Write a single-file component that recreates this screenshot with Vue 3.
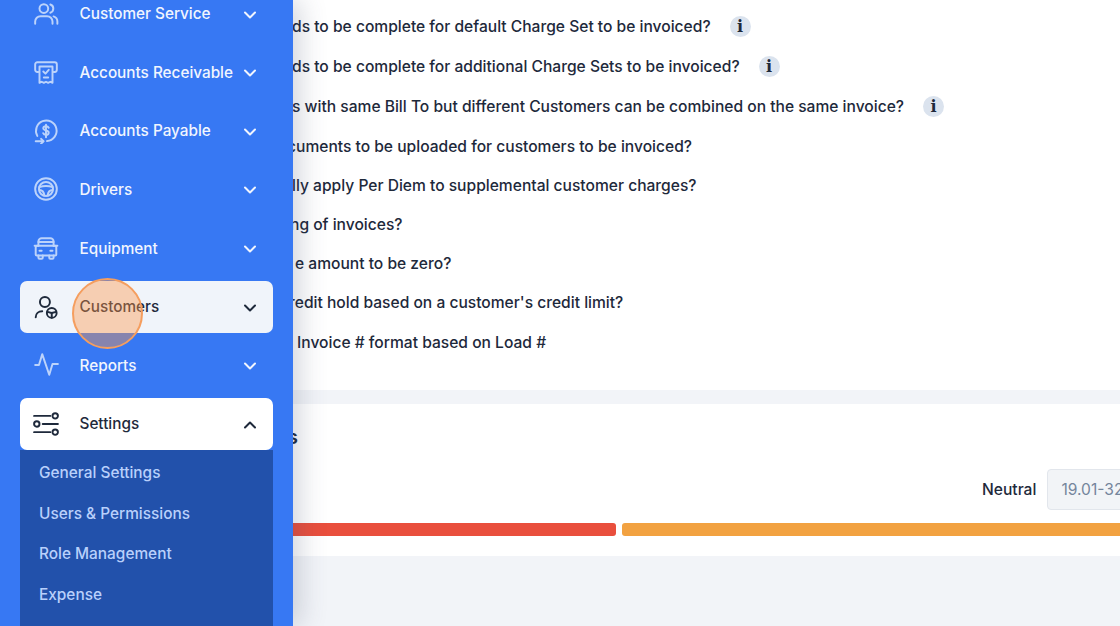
<script setup>
const navItems = [
  { label: 'Customer Service', paths: ['M14 7a4 4 0 1 1-8 0 4 4 0 0 1 8 0', 'M2 21v-2a5 5 0 0 1 5-5h6a5 5 0 0 1 5 5v2', 'M16 3.2a4 4 0 0 1 0 7.6', 'M19 14.2a5 5 0 0 1 3.5 4.8v2'] },
  { label: 'Accounts Receivable', paths: ['M5 12H4a2 2 0 0 1-2-2V5a2 2 0 0 1 2-2h16a2 2 0 0 1 2 2v5a2 2 0 0 1-2 2h-1', 'M6 7h12v15l-2-1-2 1-2-1-2 1-2-1-2 1z', 'M9.5 11.5l2 2 3-3.5', 'M10 17h4'] },
  { label: 'Accounts Payable', paths: ['M4 16.5A9.5 9.5 0 1 1 13 21.3', 'M14.5 9c-.4-.9-1.3-1.4-2.5-1.4-1.4 0-2.5.7-2.5 1.9 0 2.6 5 1.4 5 4 0 1.3-1.1 2-2.5 2-1.3 0-2.2-.5-2.6-1.5', 'M12 6.3v11.4', 'M2.5 21.5h7', 'M7.5 19.3l2.2 2.2-2.2 2.2'] },
  { label: 'Drivers', paths: ['M22 12a10 10 0 1 1-20 0 10 10 0 0 1 20 0', 'M18.5 12a6.5 6.5 0 1 1-13 0 6.5 6.5 0 0 1 13 0', 'M5.8 10.3c3.8-1.2 8.6-1.2 12.4 0', 'M6 13c2.5 0 4 1.5 4.5 5', 'M18 13c-2.5 0-4 1.5-4.5 5'] },
  { label: 'Equipment', paths: ['M5 10V6a3 3 0 0 1 3-3h8a3 3 0 0 1 3 3v4', 'M4 10h16a1.5 1.5 0 0 1 1.5 1.5V18a1 1 0 0 1-1 1h-17a1 1 0 0 1-1-1v-6.5A1.5 1.5 0 0 1 4 10', 'M5 6.5h14', 'M5 19v2a1 1 0 0 0 1 1h2a1 1 0 0 0 1-1v-2', 'M15 19v2a1 1 0 0 0 1 1h2a1 1 0 0 0 1-1v-2', 'M6 14.5h2', 'M16 14.5h2', 'M5 10H1.5', 'M19 10h3.5'] },
  { label: 'Customers', active: true, paths: ['M15.6 7.4a4.6 4.6 0 1 1-9.2 0 4.6 4.6 0 0 1 9.2 0', 'M2.5 21.5c0-3.5 2.5-5.5 6-5.5', 'M21.8 17.5a4.5 4.5 0 1 1-9 0 4.5 4.5 0 0 1 9 0', 'M13.3 16.5l4 1 4-1', 'M17.3 17.5v4.5'] },
  { label: 'Reports', paths: ['M2 12h3.5l3-10 6.5 19 3-10h5'] },
  { label: 'Settings', open: true, paths: ['M1 4.5h15', 'M23 4.5a2.5 2.5 0 1 1-5 0 2.5 2.5 0 0 1 5 0', 'M6 12a2.5 2.5 0 1 1-5 0 2.5 2.5 0 0 1 5 0', 'M9 12h14', 'M1 19.5h15', 'M23 19.5a2.5 2.5 0 1 1-5 0 2.5 2.5 0 0 1 5 0'] }
]

const subItems = ['General Settings', 'Users & Permissions', 'Role Management', 'Expense']

const questions = [
  { text: 'ds to be complete for default Charge Set to be invoiced?', shift: -1, tip: true },
  { text: 'ds to be complete for additional Charge Sets to be invoiced?', shift: -1, tip: true },
  { text: 's with same Bill To but different Customers can be combined on the same invoice?', shift: -1, tip: true },
  { text: 'cuments to be uploaded for customers to be invoiced?', shift: -6 },
  { text: 'lly apply Per Diem to supplemental customer charges?', shift: -1 },
  { text: 'ng of invoices?', shift: -3 },
  { text: 'e amount to be zero?', shift: 2 },
  { text: 'redit hold based on a customer\'s credit limit?', shift: -4 },
  { text: 'Invoice # format based on Load #', shift: 4 }
]
</script>

<template>
  <div class="page">
    <aside class="sidebar">
      <div class="nav">
        <template v-for="item in navItems" :key="item.label">
          <div class="nav-item" :class="{ active: item.active, open: item.open }">
            <svg class="nav-icon" viewBox="0 0 24 24">
              <path v-for="d in item.paths" :key="d" :d="d" />
            </svg>
            <span class="nav-label">{{ item.label }}</span>
            <svg class="chevron" viewBox="0 0 24 24">
              <path :d="item.open ? 'M6 15l6-6 6 6' : 'M6 9l6 6 6-6'" />
            </svg>
          </div>
          <div v-if="item.open" class="sub-menu">
            <div v-for="sub in subItems" :key="sub" class="sub-item">{{ sub }}</div>
          </div>
        </template>
      </div>
      <div class="click-ring"></div>
    </aside>

    <main class="content">
      <section class="card questions">
        <div
          v-for="q in questions"
          :key="q.text"
          class="question"
          :class="{ tall: q.tip }"
          :style="{ marginLeft: q.shift + 'px' }"
        >
          <span>{{ q.text }}</span>
          <span v-if="q.tip" class="info">i</span>
        </div>
      </section>

      <section class="card rating">
        <div class="rating-title">s</div>
        <div class="neutral-row">
          <span class="neutral-label">Neutral</span>
          <div class="neutral-input">19.01-32</div>
        </div>
        <div class="bar">
          <div class="bar-red"></div>
          <div class="bar-orange"></div>
        </div>
      </section>
    </main>
  </div>
</template>

<style scoped>
.page {
  display: flex;
  width: 1120px;
  height: 626px;
  overflow: hidden;
  background: #f2f4f8;
  font-family: Inter, "Liberation Sans", sans-serif;
}

.sidebar {
  position: relative;
  z-index: 2;
  flex: 0 0 293px;
  height: 626px;
  background: #3778f3;
  box-shadow: 6px 0 26px rgba(60, 72, 100, 0.24);
}

.nav {
  display: flex;
  flex-direction: column;
  gap: 6.6px;
  height: 626px;
  margin-top: -12.3px;
  padding: 0 20px;
  box-sizing: border-box;
}

.nav-item {
  display: flex;
  flex: 0 0 52px;
  align-items: center;
  height: 52px;
  padding: 0 13px;
  box-sizing: border-box;
  border-radius: 7px;
  color: #f1f5fe;
}

.nav-item.active {
  background: #f0f4fa;
  color: #1e293b;
}

.nav-item.open {
  background: #fff;
  color: #1e293b;
}

.nav-icon {
  flex: 0 0 26px;
  width: 26px;
  height: 26px;
  fill: none;
  stroke: #bcd3fb;
  stroke-width: 1.8;
  stroke-linecap: round;
  stroke-linejoin: round;
}

.nav-item.active .nav-icon,
.nav-item.open .nav-icon {
  stroke: #1e293b;
  stroke-width: 1.8;
}

.nav-label {
  flex: 1;
  margin-left: 20.5px;
  font-size: 15.3px;
  font-weight: 500;
  white-space: nowrap;
}

.chevron {
  flex: 0 0 20px;
  width: 20px;
  height: 20px;
  transform: translateY(1px);
  fill: none;
  stroke: currentColor;
  stroke-width: 2.4;
  stroke-linecap: round;
  stroke-linejoin: round;
}

.sub-menu {
  flex: 1;
  margin-top: -6.6px;
  padding-top: 3.5px;
  background: #2251ab;
  min-height: 200px;
}

.sub-item {
  height: 40.4px;
  padding-left: 19px;
  line-height: 40.4px;
  font-size: 15.4px;
  font-weight: 500;
  color: #b9d0fb;
}

/* click highlight from the recording */
.click-ring {
  position: absolute;
  top: 278px;
  left: 72px;
  width: 71px;
  height: 71px;
  box-sizing: border-box;
  border: 2.5px solid #f59e5f;
  border-radius: 50%;
  background: rgba(255, 150, 70, 0.4);
}

.content {
  flex: 1;
  min-width: 0;
  overflow: hidden;
}

.card {
  background: #fff;
}

.questions {
  height: 390px;
  padding-top: 6.6px;
  box-sizing: border-box;
}

.question {
  display: flex;
  align-items: center;
  height: 39.2px;
  font-size: 15.6px;
  line-height: 20px;
  padding-top: 1px;
  box-sizing: border-box;
  font-weight: 500;
  color: #1e293b;
  white-space: nowrap;
}

.question.tall {
  height: 40px;
  padding-top: 0;
}

.info {
  display: flex;
  align-items: center;
  justify-content: center;
  width: 21px;
  height: 21px;
  margin-left: 19px;
  border-radius: 50%;
  background: #dbe3ee;
  font-family: "DejaVu Serif", serif;
  font-size: 16px;
  font-weight: 700;
  color: #1e293b;
}

.rating {
  height: 152px;
  margin-top: 14px;
  padding-top: 21px;
  box-sizing: border-box;
}

.rating-title {
  height: 24px;
  line-height: 24px;
  margin-left: -6px;
  font-size: 20px;
  font-weight: 600;
  color: #1e293b;
}

.neutral-row {
  display: flex;
  align-items: center;
  gap: 11px;
  margin-top: 20px;
  padding-left: 689px;
  white-space: nowrap;
}

.neutral-label {
  font-size: 15.6px;
  font-weight: 500;
  color: #1e293b;
}

.neutral-input {
  flex: 0 0 100px;
  height: 41px;
  padding-left: 13px;
  box-sizing: border-box;
  border: 1px solid #e2e6ec;
  border-radius: 4px;
  background: #f2f4f7;
  line-height: 39px;
  font-size: 15.6px;
  color: #75859c;
}

.bar {
  display: flex;
  gap: 6px;
  margin-top: 13px;
  height: 13px;
}

.bar-red {
  flex: 0 0 323px;
  border-radius: 0 3px 3px 0;
  background: #e94f3d;
}

.bar-orange {
  flex: 1;
  border-radius: 3px 0 0 3px;
  background: #f2a241;
}
</style>

<style>
html,
body {
  margin: 0;
  overflow: hidden;
}
</style>
